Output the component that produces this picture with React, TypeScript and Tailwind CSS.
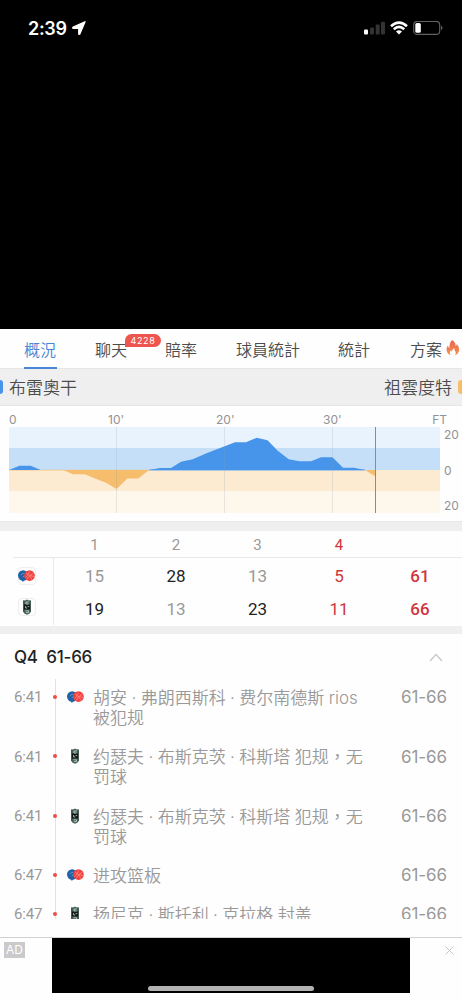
import React from "react";

const sans = "font-['Inter','Noto_Sans_CJK_TC',sans-serif]";
const digits = "font-['Roboto','Noto_Sans_CJK_TC',sans-serif]";

function HomeLogo() {
  return (
    <svg width="17" height="12" viewBox="0 0 17 12" className="shrink-0">
      <circle cx="5.2" cy="5.5" r="5.2" fill="#1f62a6" />
      <path d="M3 8.5L4.8 12L6.8 9.5Z" fill="#1f62a6" />
      <path d="M3.2 5.2Q4 3 6.5 3.2M5 7.2Q5.4 5.4 7.4 5.4" fill="none" stroke="#8fb4d8" strokeWidth=".6" />
      <circle cx="11.5" cy="5.6" r="5.3" fill="#f0413f" />
      <path d="M8 3Q12 5 14 9.5M9 9.5Q11 5 15.5 3M7.5 7.5L10 5L11.5 1.5M12 5.5L16 6.5" fill="none" stroke="#ff9f9b" strokeWidth=".6" />
    </svg>
  );
}

function AwayLogo() {
  return (
    <svg width="8" height="16" viewBox="0 0 8 16" className="shrink-0">
      <path d="M.3 1L2 1.6L4 .5L6 1.6L7.7 1V13Q7 15.3 4 15.7Q1 15.3 .3 13Z" fill="#47655b" />
      <rect x="1" y="5.5" width="6" height="5" fill="#111715" />
      <path d="M5.8 3H3V5H5.5M2.6 7V9H4.2M4.6 7.6H6.2M2.5 11.8H5.5V13.6H3" fill="none" stroke="#c6d4cb" strokeWidth=".8" />
      <path d="M.7 2V13M7.3 2V13" stroke="#1c2b26" strokeWidth=".7" />
    </svg>
  );
}

function StatusBar() {
  return (
    <div className="flex h-[329px] items-start justify-between bg-black pl-7 pr-[19px] pt-[17px] text-white">
      <div className="flex h-[22px] items-center gap-[5px]">
        <span className="pt-px text-[18px] font-semibold leading-[22px] tracking-[-0.3px]">2:39</span>
        <svg width="14" height="14" viewBox="0 0 14 14">
          <path d="M13 .8L7.8 13Q7 13.8 6.8 12.8V7.4H1.2Q.2 7 1.1 6.2Z" fill="#fff" stroke="#fff" strokeWidth="1.4" strokeLinejoin="round" />
        </svg>
      </div>
      <div className="flex h-[22px] items-center gap-[5px]">
        <svg width="22" height="14" viewBox="0 0 22 14">
          <rect x="1" y="8.5" width="4" height="5" rx="1" fill="#fff" />
          <rect x="7" y="6.5" width="4" height="7" rx="1" fill="#333" />
          <rect x="12.7" y="3.5" width="4" height="10" rx="1" fill="#333" />
          <rect x="18" y=".7" width="4" height="12.8" rx="1" fill="#333" />
        </svg>
        <svg width="18" height="14" viewBox="0 0 18 14">
          <path d="M1 5.2Q9-1.9 17 5.2M3.8 8.2Q9 3.7 14.2 8.2" fill="none" stroke="#fff" strokeWidth="2.6" />
          <path d="M6 10.4Q9 8 12 10.4L9 13.6Z" fill="#fff" />
        </svg>
        <svg width="30" height="15" viewBox="0 0 30 15">
          <rect x=".7" y=".4" width="26" height="13" rx="3.5" fill="none" stroke="#626262" strokeWidth="1.1" />
          <rect x="2.3" y="2" width="5.5" height="9.8" rx="1.5" fill="#fff" />
          <path d="M28 4.7Q29.5 5.3 29.5 6.9T28 9.1Z" fill="#626262" />
        </svg>
      </div>
    </div>
  );
}

function Tabs() {
  return (
    <nav className="flex h-10 shrink-0 items-stretch whitespace-nowrap border-b border-[#e6e6e6] pl-[24px] text-[16px] font-[350] leading-[42px] text-[#4c4c4c]">
      <span className="h-[40px] w-[33px] border-b-2 border-[#4787d5] text-[#4787d5]">概況</span>
      <span className="relative ml-[38px] w-8">
        聊天
        <span className="absolute left-[30px] top-[5px] h-[13px] w-9 rounded-full rounded-bl-none bg-[#ee554e] text-center text-[9px] font-normal leading-[13px] tracking-[0.7px] text-white">4228</span>
      </span>
      <span className="ml-[38px] w-8">賠率</span>
      <span className="ml-[39px] w-16">球員統計</span>
      <span className="ml-[38px] w-8">統計</span>
      <span className="ml-[40px] w-8">方案</span>
      <svg className="ml-[4px] mt-[11px]" width="14" height="16" viewBox="0 0 14 16">
        <path d="M6 0Q10 2.4 9.5 6Q11 5.4 10.8 4Q14 8 12.8 11.4Q12 14.5 9 15.3Q10.5 13 9.2 11.2Q8.2 10 8.4 8Q6 9 6 11.5Q5 11 5.1 10Q2.8 12.5 4.8 15.2Q.5 13.5.5 9.5Q.6 7 2 5.5Q2.2 7.7 3.5 8Q3 3.5 6 0Z" fill="url(#flame)" />
        <defs>
          <linearGradient id="flame" x1="0" y1="0" x2="0" y2="1">
            <stop stopColor="#e96450" />
            <stop offset="1" stopColor="#f5924f" />
          </linearGradient>
        </defs>
      </svg>
    </nav>
  );
}

const homeLead =
  "M0 43L10.5 38.7H21.7L31.7 43ZM140 43L151 41H162L172 34.7L183.7 32.3L197.5 26.2L226 15.3H237L247.7 10.8L258.5 13.3L268.7 23.7L279.7 32.3L290.5 34.3H302L312 30.2H323.5L334 40.8H345L356 43Z";
const awayLead =
  "M54.3 43L64 47.3H76L86 51.5L97 55.7L107.6 62L118.3 51.6H129.3L140 43ZM356 43L366.5 49.5V43Z";

function Momentum() {
  return (
    <section className="h-[115px] shrink-0 pl-[9px] pt-[7px] text-[12px] leading-[14px] text-[#929292]">
      <div className="grid h-[14px] w-[438px] grid-cols-[94px_108px_108px_1fr_auto]">
        <span>0</span>
        <span className="pl-[5px]">10'</span>
        <span className="pl-[5px]">20'</span>
        <span className="pl-[4px]">30'</span>
        <span>FT</span>
      </div>
      <div className="flex">
        <svg width="431" height="86" viewBox="0 0 431 86" className="shrink-0">
          <rect width="431" height="21" fill="#e9f3fd" />
          <rect y="21" width="431" height="22" fill="#c6dff8" />
          <rect y="43" width="431" height="21" fill="#fcead1" />
          <rect y="64" width="431" height="22" fill="#fef7ec" />
          <path d="M0 43.2H140" stroke="#f5bd6c" strokeWidth=".6" />
          <path d={awayLead} fill="#f5bd6c" />
          <path d={homeLead} fill="#4794eb" />
          <path d="M140 43H356" stroke="#4794eb" strokeWidth=".8" />
          <path d="M107.5 0V86M215.5 0V86M323.5 0V86" stroke="#8a9aaa" strokeOpacity=".2" />
          <path d="M366.5 0V86" stroke="#4a9aeb" />
        </svg>
        <div className="flex h-[86px] flex-col justify-between pl-[4px] pt-px">
          <span>20</span>
          <span>0</span>
          <span>20</span>
        </div>
      </div>
    </section>
  );
}

type Team = { home: boolean; scores: string[]; won: boolean[]; total: string };
const teams: Team[] = [
  { home: true, scores: ["15", "28", "13"], won: [false, true, false], total: "61" },
  { home: false, scores: ["19", "13", "23"], won: [true, false, true], total: "66" },
];
const current = ["5", "11"];

function ScoreTable() {
  return (
    <section className={`${digits} h-[95px] shrink-0 text-center`}>
      <div className="ml-[13px] grid h-[27px] grid-cols-[41px_81px_82px_81px_82px_80px] border-b border-[#e9e9e9] text-[15px] leading-[28px] text-[#999]">
        <span />
        <span>1</span>
        <span>2</span>
        <span>3</span>
        <span className="text-[#d0353b]">4</span>
      </div>
      <div className="flex h-[67px] text-[17px]">
        <div className="flex w-[54px] flex-col items-center gap-[13px] border-r border-[#ebebeb] pt-[9px]">
          <span className="flex size-[18px] items-center justify-center rounded-sm border border-[#eee]"><HomeLogo /></span>
          <span className="flex size-[18px] items-center justify-center rounded-sm border border-[#eee]"><AwayLogo /></span>
        </div>
        <div className="pt-[2px]">
          {teams.map((team, i) => (
            <div key={i} className="grid h-[33px] grid-cols-[81px_82px_81px_82px_80px] leading-[33px]">
              {team.scores.map((score, q) => (
                <span key={q} className={team.won[q] ? "text-[#222]" : "text-[#999]"}>{score}</span>
              ))}
              <span className="text-[#d0353b]">{current[i]}</span>
              <span className="font-medium text-[#d0353b]">{team.total}</span>
            </div>
          ))}
        </div>
      </div>
    </section>
  );
}

const plays = [
  { time: "6:41", home: true, lines: ["胡安 · 弗朗西斯科 · 费尔南德斯 rios", "被犯规"] },
  { time: "6:41", home: false, lines: ["约瑟夫 · 布斯克茨 · 科斯塔 犯规，无", "罚球"] },
  { time: "6:41", home: false, lines: ["约瑟夫 · 布斯克茨 · 科斯塔 犯规，无", "罚球"] },
  { time: "6:47", home: true, lines: ["进攻篮板"] },
  { time: "6:47", home: false, lines: ["扬尼克 · 斯托利 · 克拉格 封盖"] },
];

function PlayByPlay() {
  return (
    <section className="h-[285px] shrink-0 overflow-hidden">
      <header className="flex h-[45px] items-center justify-between pl-[14px] pr-[19px] pt-px">
        <h2 className="whitespace-pre pt-[2px] text-[17px] font-medium tracking-[-0.25px] text-[#222]">Q4  61-66</h2>
        <svg width="14" height="9" viewBox="0 0 14 9">
          <path d="M1 8L7 1.5L13 8" fill="none" stroke="#c8c8c8" strokeWidth="1.3" />
        </svg>
      </header>
      <div>
        {plays.map((play, i) => (
          <div key={i} className={`flex items-stretch text-[17px] text-[#999] ${play.lines.length > 1 ? "h-[59.3px]" : "h-[39px]"}`}>
            <span className={`${digits} w-[42px] shrink-0 pl-[14px] pt-[7.4px] text-[15px] leading-[22px] tracking-[-0.2px]`}>{play.time}</span>
            <div className="flex w-[26px] shrink-0 justify-center bg-[linear-gradient(#e3e3e3,#e3e3e3)] bg-[length:1px_100%] bg-center bg-no-repeat pt-[16px]">
              <span className="size-1 rounded-full bg-[#f04a47]" />
            </div>
            <div className="flex h-[36px] w-[14px] shrink-0 items-center justify-center">
              {play.home ? <HomeLogo /> : <AwayLogo />}
            </div>
            <p className="ml-[11px] flex-1 whitespace-nowrap pt-[9px] font-[350] leading-[20px] [word-spacing:-0.35px]">
              {play.lines.map((line) => <span key={line} className="block">{line}</span>)}
            </p>
            <span className="w-[61px] shrink-0 pt-[8.4px] leading-[20px] tracking-[-0.1px]">61-66</span>
          </div>
        ))}
      </div>
    </section>
  );
}

export default function App() {
  return (
    <main className={`${sans} flex h-[1000px] w-[462px] flex-col overflow-hidden bg-[#fefefe]`}>
      <StatusBar />
      <Tabs />
      <div className="flex h-[37px] shrink-0 items-center border-b border-[#e5e5e5] bg-[#efefef] text-[17px] font-[350] text-[#4c4c4c]">
        <span className="h-[14px] w-[3px] rounded-r-[3px] bg-[#4794eb]" />
        <span className="ml-[6px] pt-[4px]">布雷奧干</span>
        <span className="ml-auto pt-[4px]">祖雲度特</span>
        <span className="ml-[6px] h-[14px] w-[4px] rounded-l-[3px] bg-[#f5bd6c]" />
      </div>
      <Momentum />
      <div className="h-[10px] shrink-0 border-t border-[#e8e8e8] bg-[#efefef]" />
      <ScoreTable />
      <div className="h-[8px] shrink-0 bg-[#efefef]" />
      <PlayByPlay />
      <footer className="mt-auto flex h-[63px] shrink-0 items-start border-t border-[#d2d2d2]">
        <span className="ml-[4px] mt-[4px] h-[16px] w-[21px] bg-[#cacaca] text-center text-[12px] leading-[16px] text-white">AD</span>
        <div className="ml-[27px] flex h-[55px] w-[358px] items-end justify-center bg-black pb-[2px]">
          <span className="h-[5px] w-[166px] rounded-full bg-[#b2b2b2]" />
        </div>
        <svg className="ml-[35px] mt-[8px]" width="9" height="9" viewBox="0 0 9 9">
          <path d="M.5.5L8.5 8.5M8.5.5L.5 8.5" stroke="#c5c5c5" />
        </svg>
      </footer>
    </main>
  );
}
